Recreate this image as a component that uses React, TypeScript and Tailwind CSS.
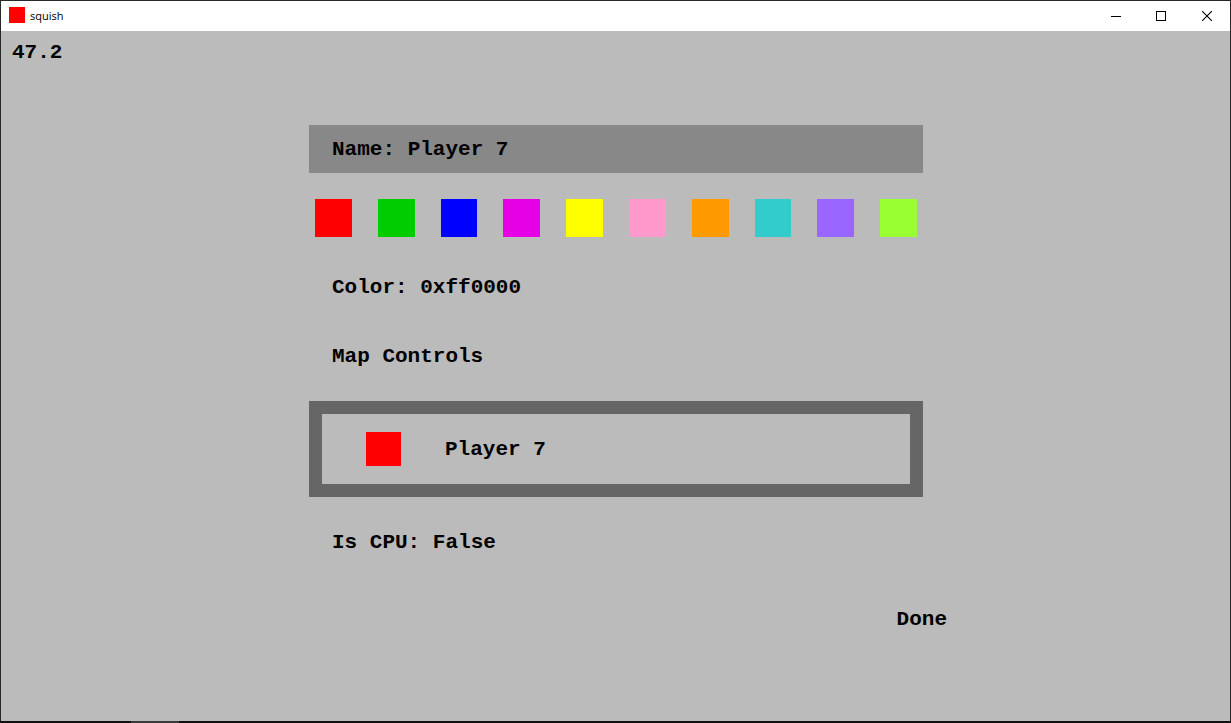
import { useState } from "react";

const swatches = [
  { name: "Red", hex: "ff0000", bg: "bg-[#ff0000]" },
  { name: "Green", hex: "00cc00", bg: "bg-[#00cc00]" },
  { name: "Blue", hex: "0000ff", bg: "bg-[#0000ff]" },
  { name: "Magenta", hex: "e600e6", bg: "bg-[#e600e6]" },
  { name: "Yellow", hex: "ffff00", bg: "bg-[#ffff00]" },
  { name: "Pink", hex: "ff99cc", bg: "bg-[#ff99cc]" },
  { name: "Orange", hex: "ff9900", bg: "bg-[#ff9900]" },
  { name: "Teal", hex: "33cccc", bg: "bg-[#33cccc]" },
  { name: "Purple", hex: "9966ff", bg: "bg-[#9966ff]" },
  { name: "Lime", hex: "99ff33", bg: "bg-[#99ff33]" },
];

function TitleBar() {
  return (
    <header className="flex h-[30px] shrink-0 items-center justify-between bg-white pl-2">
      <div className="flex items-center gap-[5px]">
        <span className="mb-0.5 size-4 bg-[#ff0000]" />
        <h1 className="font-['Open_Sans',sans-serif] text-[11px] leading-4">squish</h1>
      </div>
      <div className="flex h-full">
        <button aria-label="Minimize" className="grid w-11 place-items-center">
          <svg width="10" height="10" shapeRendering="crispEdges">
            <path d="M0 5h10v1H0z" />
          </svg>
        </button>
        <button aria-label="Maximize" className="grid w-[46px] place-items-center">
          <svg width="10" height="10" shapeRendering="crispEdges">
            <path d="M0 0h10v10H0zM1 1v8h8V1z" fillRule="evenodd" />
          </svg>
        </button>
        <button aria-label="Close" className="grid w-[46px] place-items-center">
          <svg width="10" height="10" fill="none" stroke="black" strokeWidth="1.1">
            <path d="M0 0l10 10M10 0L0 10" />
          </svg>
        </button>
      </div>
    </header>
  );
}

export default function App() {
  const [name, setName] = useState("Player 7");
  const [color, setColor] = useState(swatches[0]);
  const [isCpu, setIsCpu] = useState(false);

  return (
    <div className="flex min-h-screen flex-col bg-[#111111]">
      <div className="flex grow flex-col border-x border-t border-[#28282a] bg-[#bbbbbb]">
        <TitleBar />
        <main className="grow pl-px font-['Liberation_Mono','Courier_New',monospace] text-[21px] leading-6 font-bold text-black">
          <p className="px-2.5 pt-2.5">47.2</p>
          <form
            className="mx-auto mt-[60px] flex w-1/2 flex-col"
            onSubmit={(event) => event.preventDefault()}
          >
            <div className="flex h-12 items-center bg-[#888888] px-[23px] pt-0.5">
              <label htmlFor="player-name" className="whitespace-pre">
                {"Name: "}
              </label>
              <input
                id="player-name"
                value={name}
                onChange={(event) => setName(event.target.value)}
                className="min-w-0 grow bg-transparent outline-none"
              />
            </div>
            <div className="my-[26px] grid grid-cols-10 gap-[26px] px-1.5">
              {swatches.map((swatch) => (
                <button
                  key={swatch.hex}
                  type="button"
                  aria-label={swatch.name}
                  onClick={() => setColor(swatch)}
                  className={`h-[38px] ${swatch.bg}`}
                />
              ))}
            </div>
            <div className="flex flex-col gap-[21px]">
              <p className="flex h-12 items-center px-[23px] pt-0.5">Color: 0x{color.hex}</p>
              <button type="button" className="h-12 px-[23px] pt-0.5 text-left">
                Map Controls
              </button>
              <div className="flex h-24 items-center gap-11 border-[13px] border-[#666666] px-11">
                <span className={`h-[34px] w-[35px] ${color.bg}`} />
                <span className="pt-0.5">{name}</span>
              </div>
              <button
                type="button"
                onClick={() => setIsCpu(!isCpu)}
                className="h-12 px-[23px] pt-0.5 text-left"
              >
                Is CPU: {isCpu ? "True" : "False"}
              </button>
            </div>
            <button type="submit" className="mt-[29px] -mr-6 h-12 self-end pt-0.5">
              Done
            </button>
          </form>
        </main>
      </div>
      <div className="h-0.5 shrink-0 pl-[131px]">
        <div className="h-full w-12 bg-[#3a3a3a]" />
      </div>
    </div>
  );
}
